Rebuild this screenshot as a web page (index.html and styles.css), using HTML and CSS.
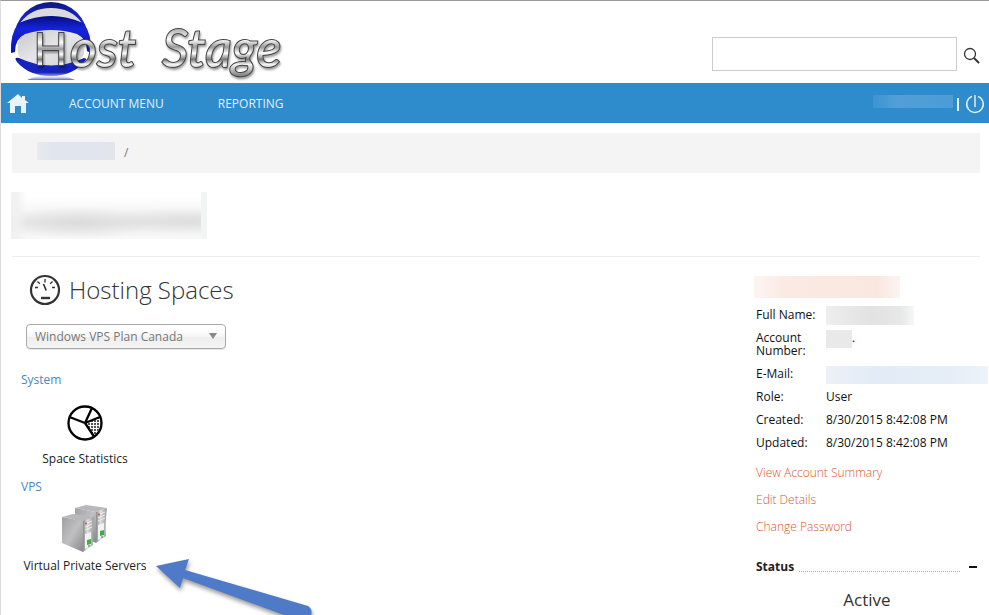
FILE: index.html
```html
<!DOCTYPE html>
<html lang="en">
<head>
    <meta charset="UTF-8">
    <meta name="viewport" content="width=device-width, initial-scale=1.0">
    <title>Host Stage</title>
    <link rel="stylesheet" href="styles.css">
</head>
<body>

    <header class="header">
        <a href="#" class="logo">
            <svg width="292" height="82" viewBox="0 0 292 82" role="img" aria-label="Host Stage">
                <defs>
                    <linearGradient id="chrome" x1="0" y1="0" x2="0" y2="1">
                        <stop offset="0.2" stop-color="#aaa"/>
                        <stop offset="0.38" stop-color="#fff"/>
                        <stop offset="0.5" stop-color="#999"/>
                        <stop offset="0.6" stop-color="#fff"/>
                        <stop offset="0.7" stop-color="#777"/>
                        <stop offset="0.78" stop-color="#f4f4f4"/>
                        <stop offset="0.95" stop-color="#888"/>
                    </linearGradient>
                    <linearGradient id="blue" x1="0" y1="0" x2="0" y2="1">
                        <stop offset="0" stop-color="#10187a"/>
                        <stop offset="0.2" stop-color="#1424c8"/>
                        <stop offset="0.8" stop-color="#1622b8"/>
                        <stop offset="1" stop-color="#8a94ee"/>
                    </linearGradient>
                    <linearGradient id="band" x1="0" y1="0" x2="0" y2="1">
                        <stop offset="0" stop-color="#060d80"/>
                        <stop offset="0.35" stop-color="#1524dc"/>
                        <stop offset="1" stop-color="#0b14a4"/>
                    </linearGradient>
                    <linearGradient id="glass" x1="0" y1="0" x2="1" y2="1">
                        <stop offset="0" stop-color="#c8c8cc"/>
                        <stop offset="0.5" stop-color="#e6e6e8"/>
                        <stop offset="1" stop-color="#cfcfd3"/>
                    </linearGradient>
                    <linearGradient id="reflect" x1="0" y1="0" x2="0" y2="1">
                        <stop offset="0" stop-color="#fff" stop-opacity="0"/>
                        <stop offset="1" stop-color="#5560c8"/>
                    </linearGradient>
                </defs>
                <path d="M26 79Q50 68 74 79z" fill="url(#reflect)"/>
                <circle cx="50" cy="38" r="37" fill="url(#blue)"/>
                <path d="M19 22Q30 7 50 7Q70 7 81 22Q50 9 19 22z" fill="#dadadf"/>
                <path d="M10 51Q14 60 22 62L78 62Q86 60 90 51V34H10z" fill="#fff"/>
                <path d="M17 53Q15 37 24 32Q50 24 76 32Q85 37 83 53Q78 65 50 65Q22 65 17 53z" fill="url(#glass)"/>
                <path d="M10 52Q9 32 18 22Q50 8 82 22Q91 32 90 52L86 50Q86 38 76 33Q50 25 24 33Q14 38 14 51z" fill="url(#band)"/>
                <path d="M18 57Q50 72 83 57Q87 58 84 60Q72 75 50 75Q28 75 16 61Q12 56 18 57z" fill="url(#blue)"/>
                <g class="logo-shadow">
                    <text class="logo-h" x="33" y="64">H</text>
                    <text class="logo-text" x="69" y="66">ost</text>
                    <text class="logo-text" x="161" y="66">Stage</text>
                </g>
            </svg>
        </a>
        <form class="search">
            <input type="text" class="search-input" aria-label="Search">
            <button type="button" class="search-button" aria-label="Search">
                <svg width="18" height="18" viewBox="0 0 18 18" fill="none" stroke="#333">
                    <circle cx="7" cy="7" r="5.5" stroke-width="1.3"/>
                    <path d="M11 11l5 5" stroke-width="2"/>
                </svg>
            </button>
        </form>
    </header>

    <nav class="nav">
        <a href="#" class="home" aria-label="Home">
            <svg width="22" height="20" viewBox="0 0 22 20" fill="#e8f4fc">
                <path d="M11 0L0 9h3v10h5v-7h6v7h5V9h3l-4-3V2h-3v2z"/>
            </svg>
        </a>
        <a href="#" class="nav-link">ACCOUNT MENU</a>
        <a href="#" class="nav-link">REPORTING</a>
        <div class="nav-user">
            <span class="mask mask-user"></span>
            <span class="divider"></span>
            <a href="#" class="power" aria-label="Sign out">
                <svg width="20" height="20" viewBox="0 0 20 20" fill="none" stroke="#dceefa" stroke-width="1.5">
                    <path d="M7 2.4a8.3 8.3 0 1 0 6 0M10 1v12"/>
                </svg>
            </a>
        </div>
    </nav>

    <div class="page">
        <div class="breadcrumb">
            <span class="mask mask-crumb"></span>
            <span>/</span>
        </div>

        <div class="title">
            <span class="mask mask-title"></span>
        </div>

        <div class="columns">
            <main class="content">
                <h1>
                    <svg width="32" height="32" viewBox="0 0 32 32" fill="none" stroke="#333">
                        <circle cx="16" cy="16" r="14" stroke-width="2.2"/>
                        <path d="M6 13.5h3M23 13.5h3M8.5 7.5l2.3 2.3M23.5 7.5l-2.3 2.3M16 5v3.5" stroke-width="1.3"/>
                        <path d="M14.5 10l2.7 6.5" stroke-width="1.7"/>
                        <path d="M12 24h9" stroke-width="2.4"/>
                    </svg>
                    Hosting Spaces
                </h1>

                <div class="select">
                    <select aria-label="Hosting space">
                        <option>Windows VPS Plan Canada</option>
                    </select>
                </div>

                <h2>System</h2>
                <a href="#" class="item">
                    <svg width="36" height="36" viewBox="0 0 36 36" fill="none" stroke="#000">
                        <defs>
                            <pattern id="dots" width="3" height="3" patternUnits="userSpaceOnUse">
                                <circle cx="1" cy="1" r="0.9" fill="#000" stroke="none"/>
                            </pattern>
                        </defs>
                        <path d="M18 18l15-6q3 11-6 19z" fill="url(#dots)" stroke="none"/>
                        <circle cx="18" cy="18" r="16.5" stroke-width="2.3"/>
                        <path d="M18 18L2.500 12M18 18l7-15M18 18l15-6M18 18l9 13.500" stroke-width="2.3"/>
                    </svg>
                    Space Statistics
                </a>

                <h2>VPS</h2>
                <a href="#" class="item">
                    <svg width="46" height="48" viewBox="0 0 46 48">
                        <defs>
                            <linearGradient id="side" x1="0" y1="0" x2="1" y2="1">
                                <stop offset="0" stop-color="#a0a0a3"/>
                                <stop offset="0.5" stop-color="#c0c0c3"/>
                                <stop offset="1" stop-color="#88888c"/>
                            </linearGradient>
                            <linearGradient id="front" x1="0" y1="0" x2="1" y2="0">
                                <stop offset="0" stop-color="#8a8a8e"/>
                                <stop offset="0.4" stop-color="#dededf"/>
                                <stop offset="1" stop-color="#9a9a9e"/>
                            </linearGradient>
                            <g id="server">
                                <path d="M0 3L11 0l21 3-11 4z" fill="#b8b8bb"/>
                                <path d="M0 3l21 4v31L0 29z" fill="url(#side)"/>
                                <path d="M21 7l11-4q-2 15-1 28l-10 7z" fill="url(#front)"/>
                                <path d="M23 10l7-3M23 13l7-3M23 16l7-3" stroke="#eee"/>
                                <circle cx="24" cy="9.500" r="1" fill="#d44"/>
                                <path d="M23 20l6-2v13l-6 4z" fill="#f1f3f1"/>
                                <path d="M25 26l4-1v5l-4 1z" fill="#3fae3f"/>
                                <circle cx="27" cy="32" r="1" fill="#4cba4c"/>
                            </g>
                        </defs>
                        <use href="#server" x="13"/>
                        <use href="#server" y="9"/>
                    </svg>
                    Virtual Private Servers
                </a>
                <svg class="arrow" width="158" height="60" viewBox="0 0 158 60" aria-hidden="true">
                    <path d="M0 9L33 2l-4 11 123 36q6 4 2 12h-18L27 21l-3 10z" fill="#4e7ac7"/>
                </svg>
            </main>

            <aside class="sidebar">
                <span class="mask mask-name"></span>
                <table class="details">
                    <tr><th>Full Name:</th><td><span class="mask mask-full"></span></td></tr>
                    <tr><th>Account Number:</th><td><span class="mask mask-number"></span>.</td></tr>
                    <tr><th>E-Mail:</th><td><span class="mask mask-email"></span></td></tr>
                    <tr><th>Role:</th><td>User</td></tr>
                    <tr><th>Created:</th><td>8/30/2015 8:42:08 PM</td></tr>
                    <tr><th>Updated:</th><td>8/30/2015 8:42:08 PM</td></tr>
                </table>
                <div class="links">
                    <a href="#">View Account Summary</a>
                    <a href="#">Edit Details</a>
                    <a href="#">Change Password</a>
                </div>
                <div class="status">
                    <h3>Status</h3>
                    <span class="dotted"></span>
                    <button type="button" class="collapse" aria-label="Collapse"></button>
                </div>
                <p class="active">Active</p>
            </aside>
        </div>
    </div>

</body>
</html>
```
FILE: styles.css
```css
* {
    margin: 0;
    padding: 0;
    box-sizing: border-box;
}
body {
    min-height: 100vh;
    font-family: "Open Sans", "Noto Sans", sans-serif;
    font-size: 12px;
    line-height: 16px;
    color: #222;
    background-color: #fff;
    border-top: 1px solid #999;
    border-left: 1px solid #ddd;
    overflow-x: hidden;
}
a {
    color: inherit;
    text-decoration: none;
}
button {
    border: none;
    background: none;
    cursor: pointer;
}
svg {
    display: block;
}
.header {
    display: flex;
    justify-content: space-between;
    align-items: flex-start;
    height: 82px;
}
.logo-h,
.logo-text {
    fill: url(#chrome);
    stroke: #444;
    stroke-width: 2px;
    paint-order: stroke;
}
.logo-h {
    font: 400 46px "Liberation Sans", sans-serif;
}
.logo-text {
    font: italic 400 52px Lato, sans-serif;
}
.logo-shadow {
    filter: drop-shadow(1px 2px 1px rgba(0, 0, 0, 0.4));
}
.search {
    display: flex;
    align-items: center;
    gap: 6px;
    padding: 36px 8px 0 0;
}
.search-input {
    width: 245px;
    height: 34px;
    padding: 0 8px;
    border: 1px solid #ccc;
    outline: none;
}
.search-button {
    padding-top: 4px;
}

/* blue menu bar */
.nav {
    display: flex;
    align-items: center;
    height: 40px;
    padding: 2px 4px 0 6px;
    background-color: #2e8bcc;
    color: #e4f1fa;
}
.nav-link {
    margin-left: 40px;
}
.nav-link + .nav-link {
    margin-left: 54px;
}
.nav-user {
    display: flex;
    align-items: center;
    gap: 4px;
    margin-left: auto;
}
.divider {
    width: 2px;
    height: 13px;
    background-color: #e4f1fa;
}
.power {
    margin-left: 2px;
}

/* blurred out private values */
.mask {
    display: block;
}
.mask-user {
    width: 80px;
    height: 13px;
    margin-bottom: 6px;
    background: linear-gradient(90deg, #3d94d0, #529fd7 30%, #4c9cd5);
}
.mask-crumb {
    width: 78px;
    height: 18px;
    margin-bottom: 4px;
    background: linear-gradient(90deg, #e8ebf0, #e0e5ee 20%, #e0e5ee 80%, #e2e5e9);
}
.mask-title {
    width: 196px;
    height: 47px;
    background:
        linear-gradient(90deg, rgba(240, 240, 240, 0.9) 3%, transparent 8%, transparent 97%, #f3f4f4 97%),
        radial-gradient(ellipse at 35% 65%, rgba(210, 210, 210, 0.6), transparent 40%),
        radial-gradient(ellipse at 90% 60%, rgba(210, 210, 210, 0.5), transparent 35%),
        linear-gradient(#fff 10%, #f8f8f8 35%, #e8e8e8 65%, #f8f8f8 95%);
}
.mask-name {
    width: 146px;
    height: 22px;
    background: linear-gradient(90deg, #fdf5f2, #fbeae3 20%, #fae8e0 85%, #fcf4f1);
}
.mask-full {
    width: 88px;
    height: 19px;
    background: linear-gradient(90deg, #eee, #e3e2e3 50%, #e6e7e6 85%, #f5f8f7);
}
.mask-number {
    width: 26px;
    height: 18px;
    background-color: #e9e9e9;
}
.mask-email {
    width: 162px;
    height: 18px;
    background: linear-gradient(90deg, #edf1f7, #e3ebf6 30%, #e5edf7 75%, #eef3f9);
}

.page {
    padding: 10px 9px 0 11px;
}
.breadcrumb {
    display: flex;
    align-items: center;
    gap: 9px;
    height: 40px;
    padding: 0 25px;
    background-color: #f4f4f4;
    color: #777;
}
.title {
    padding: 19px 0 17px;
    border-bottom: 1px solid #eee;
}
.title .mask {
    margin-left: -1px;
}
.columns {
    display: flex;
    justify-content: space-between;
}
.content {
    position: relative;
    flex: 1;
    padding: 16px 9px 0;
}
h1 {
    display: flex;
    align-items: center;
    gap: 8px;
    padding-left: 8px;
    font-size: 24px;
    line-height: 34px;
    font-weight: 300;
    color: #333;
}
.select {
    position: relative;
    width: 200px;
    margin: 17px 0 23px 5px;
}
.select::after {
    content: "";
    position: absolute;
    top: 9px;
    right: 9px;
    border: 4px solid transparent;
    border-top: 6px solid #888;
    border-bottom: none;
    pointer-events: none;
}
select {
    display: block;
    width: 100%;
    height: 25px;
    padding: 1px 8px 0;
    appearance: none;
    font: inherit;
    color: #777;
    border: 1px solid #aaa;
    border-radius: 4px;
    background: linear-gradient(#fff 20%, #f6f6f6 50%, #eee 52%, #f4f4f4);
    box-shadow: 0 1px 1px rgba(0, 0, 0, 0.1);
}
h2 {
    font-size: 12px;
    line-height: 16px;
    font-weight: 400;
    color: #4488cc;
}
.item {
    display: flex;
    flex-direction: column;
    align-items: center;
    justify-content: flex-end;
    gap: 10px;
    width: 128px;
    height: 79px;
    margin-bottom: 12px;
}
.item + h2 + .item {
    gap: 5px;
}
.arrow {
    position: absolute;
    left: 144px;
    top: 300px;
    overflow: visible;
    filter: drop-shadow(1px 3px 2px rgba(0, 0, 0, 0.4));
}

/* account details */
.sidebar {
    width: 226px;
    padding-top: 19px;
}
.details {
    width: 100%;
    margin-top: 5px;
    border-collapse: collapse;
    table-layout: fixed;
    line-height: 13px;
    color: #111;
}
.details th {
    width: 72px;
    padding: 5px 0 5px 2px;
    font-weight: 400;
    text-align: left;
    vertical-align: top;
}
.details td {
    padding: 5px 0;
    vertical-align: top;
}
.details .mask {
    display: inline-block;
    margin: -6px 0;
    vertical-align: middle;
}
.links {
    display: flex;
    flex-direction: column;
    gap: 11px;
    padding: 11px 0 0 2px;
    color: #d9582b;
    font-weight: 300;
}
.status {
    display: flex;
    align-items: center;
    gap: 5px;
    margin-top: 24px;
    padding: 0 3px 0 2px;
}
h3 {
    font-size: 12px;
    font-weight: 700;
}
.dotted {
    flex: 1;
    height: 10px;
    border-bottom: 1px dotted #aaa;
}
.collapse {
    width: 8px;
    height: 2px;
    margin-left: 4px;
    background-color: #111;
}
.active {
    margin-top: 13px;
    font-size: 17px;
    line-height: 24px;
    text-align: center;
    color: #333;
}
```
